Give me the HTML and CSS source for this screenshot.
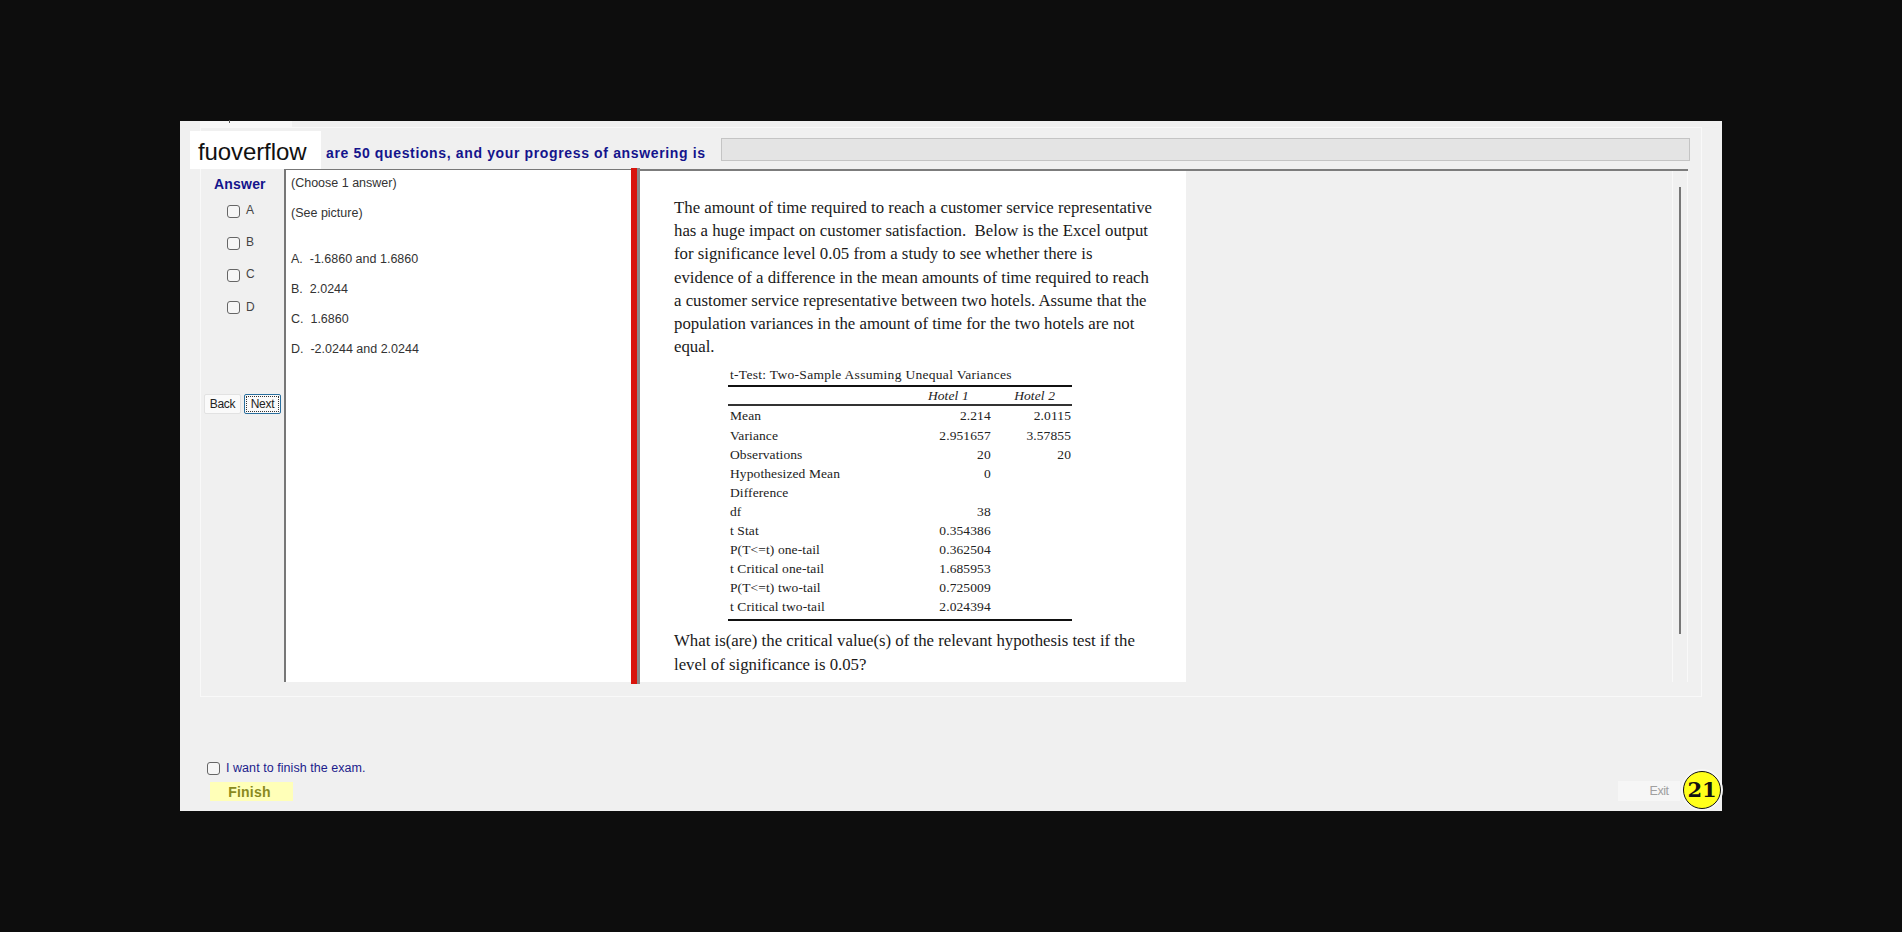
FILE: index.html
```html
<!DOCTYPE html>
<html lang="en">
<head>
    <meta charset="UTF-8">
    <meta name="viewport" content="width=device-width, initial-scale=1.0">
    <title>Exam</title>
    <link rel="stylesheet" href="styles.css">
</head>
<body>
    <div class="exam-window">
        <div class="logo">fuoverflow</div>
        <div class="tab"></div>

        <div class="frame">
            <!-- Progress line -->
            <div class="progress-row">
                <span class="progress-text">are 50 questions, and your progress of answering is</span>
                <div class="progress-bar"></div>
            </div>

            <div class="main-row">
                <!-- Answer checkboxes -->
                <div class="answer-col">
                    <div class="answer-title">Answer</div>
                    <label class="answer-opt"><input type="checkbox"> A</label>
                    <label class="answer-opt"><input type="checkbox"> B</label>
                    <label class="answer-opt"><input type="checkbox"> C</label>
                    <label class="answer-opt"><input type="checkbox"> D</label>
                    <div class="nav-btns">
                        <button class="btn">Back</button>
                        <button class="btn btn-focus"><span>Next</span></button>
                    </div>
                </div>

                <!-- Choices -->
                <div class="choices">
                    <p class="choose">(Choose 1 answer)</p>
                    <p class="see">(See picture)</p>
                    <p class="choice-a">A.&nbsp; -1.6860 and 1.6860</p>
                    <p>B.&nbsp; 2.0244</p>
                    <p>C.&nbsp; 1.6860</p>
                    <p>D.&nbsp; -2.0244 and 2.0244</p>
                </div>

                <div class="splitter"></div>

                <!-- Question picture -->
                <div class="doc-pane">
                    <div class="doc">
                        <p class="doc-text">The amount of time required to reach a customer service representative has a huge impact on customer satisfaction.&nbsp; Below is the Excel output for significance level 0.05 from a study to see whether there is evidence of a difference in the mean amounts of time required to reach a customer service representative between two hotels. Assume that the population variances in the amount of time for the two hotels are not equal.</p>
                        <table class="ttest">
                            <caption>t-Test: Two-Sample Assuming Unequal Variances</caption>
                            <thead>
                                <tr><th></th><th>Hotel 1</th><th>Hotel 2</th></tr>
                            </thead>
                            <tbody>
                                <tr><td>Mean</td><td>2.214</td><td>2.0115</td></tr>
                                <tr><td>Variance</td><td>2.951657</td><td>3.57855</td></tr>
                                <tr><td>Observations</td><td>20</td><td>20</td></tr>
                                <tr><td>Hypothesized Mean</td><td>0</td><td></td></tr>
                                <tr><td>Difference</td><td></td><td></td></tr>
                                <tr><td>df</td><td>38</td><td></td></tr>
                                <tr><td>t Stat</td><td>0.354386</td><td></td></tr>
                                <tr><td>P(T&lt;=t) one-tail</td><td>0.362504</td><td></td></tr>
                                <tr><td>t Critical one-tail</td><td>1.685953</td><td></td></tr>
                                <tr><td>P(T&lt;=t) two-tail</td><td>0.725009</td><td></td></tr>
                                <tr><td>t Critical two-tail</td><td>2.024394</td><td></td></tr>
                            </tbody>
                        </table>
                        <p class="doc-text doc-ask">What is(are) the critical value(s) of the relevant hypothesis test if the level of significance is 0.05?</p>
                    </div>
                    <div class="doc-rest"></div>
                    <div class="scroll-track"><div class="scroll-thumb"></div></div>
                </div>
            </div>
        </div>

        <!-- Bottom controls -->
        <div class="footer">
            <label class="finish-check"><input type="checkbox"> I want to finish the exam.</label>
            <div class="footer-row">
                <button class="finish-btn">Finish</button>
                <button class="exit-btn">Exit</button>
            </div>
        </div>

        <div class="badge">21</div>
    </div>
</body>
</html>
```

FILE: styles.css
```css
body {
    margin: 0;
    height: 932px;
    padding-top: 121px;
    box-sizing: border-box;
    background-color: #0d0d0d;
    font-family: "Liberation Sans", Arial, sans-serif;
    overflow: hidden;
}
p {
    margin: 0;
}
.exam-window {
    position: relative;
    display: flex;
    flex-direction: column;
    width: 1542px;
    height: 690px;
    margin-left: 180px;
    background-color: #f0f0f0;
}
.logo {
    position: absolute;
    left: 10px;
    top: 10px;
    width: 131px;
    height: 38px;
    padding-left: 8px;
    box-sizing: border-box;
    background-color: #fff;
    color: #111;
    font-size: 24px;
    letter-spacing: -0.1px;
    line-height: 41px;
}
.tab {
    position: relative;
    width: 92px;
    height: 6px;
    margin-left: 20px;
    background-color: #f8f8f8;
    flex-shrink: 0;
}
.tab::before {
    content: "";
    position: absolute;
    left: 29px;
    top: -1px;
    width: 1px;
    height: 3px;
    background-color: #555;
}
.frame {
    width: 1502px;
    height: 570px;
    margin-left: 20px;
    border: 1px solid #f9f9f9;
    box-sizing: border-box;
    display: flex;
    flex-direction: column;
}
.progress-row {
    display: flex;
    align-items: flex-start;
    height: 41px;
    padding-left: 125px;
    flex-shrink: 0;
}
.progress-text {
    color: #14148c;
    font-size: 14px;
    font-weight: bold;
    letter-spacing: 0.64px;
    line-height: 16px;
    white-space: nowrap;
    margin-top: 17px;
}
.progress-bar {
    width: 969px;
    height: 23px;
    margin-left: 15px;
    margin-top: 10px;
    box-sizing: border-box;
    background-color: #e4e4e4;
    border: 1px solid #c4c4c4;
}
.main-row {
    display: flex;
    height: 513px;
}
.answer-col {
    width: 83px;
    flex-shrink: 0;
    position: relative;
}
.answer-title {
    margin: 7px 0 2px 13px;
    color: #14148c;
    font-size: 14px;
    font-weight: bold;
    letter-spacing: 0.2px;
    line-height: 16px;
}
.answer-opt {
    display: flex;
    align-items: center;
    gap: 6px;
    height: 32.2px;
    padding-left: 26px;
    color: #444;
    font-size: 12px;
}
input[type="checkbox"] {
    appearance: none;
    width: 13px;
    height: 13px;
    margin: 0;
    background-color: #f6f6f6;
    border: 1px solid #666;
    border-radius: 3px;
    box-sizing: border-box;
}
.answer-opt input {
    margin-top: 2px;
}
.nav-btns {
    display: flex;
    gap: 3px;
    margin: 71px 0 0 3px;
}
.btn {
    width: 37px;
    height: 20px;
    padding: 0;
    font-family: inherit;
    font-size: 12px;
    letter-spacing: -0.3px;
    color: #222;
    background-color: #fafafa;
    border: 1px solid #e2e2e2;
    border-radius: 2px;
}
.btn-focus {
    border: 1px solid #2a6f9e;
}
.btn-focus span {
    display: block;
    margin: 1px;
    line-height: 14px;
    border: 1px dotted #333;
}
.choices {
    width: 347px;
    flex-shrink: 0;
    padding: 6px 0 0 5px;
    box-sizing: border-box;
    background-color: #fff;
    border-left: 2px solid #777;
    border-top: 1px solid #777;
    color: #333;
    font-size: 12.5px;
    line-height: 15px;
}
.choices p {
    margin-bottom: 15px;
}
.choices .see {
    margin-bottom: 31px;
}
.splitter {
    width: 6px;
    flex-shrink: 0;
    margin-top: -1px;
    margin-bottom: -2px;
    background-color: #d8140c;
    border-right: 3px solid #8a8a8a;
}
.doc-pane {
    flex: none;
    width: 1048px;
    display: flex;
    border-top: 2px solid #7c7c7c;
    height: 511px;
}
.doc {
    width: 546px;
    height: 511px;
    padding: 25px 0 0 34px;
    box-sizing: border-box;
    background-color: #fff;
    flex-shrink: 0;
    overflow: hidden;
}
.doc-text {
    width: 480px;
    color: #1a1a1a;
    font-family: "Liberation Serif", "Times New Roman", serif;
    font-size: 16.8px;
    line-height: 23.2px;
}
.doc-ask {
    margin-top: 8px;
}
.ttest {
    width: 344px;
    margin: 6px 0 0 54px;
    border-collapse: collapse;
    color: #222;
    font-family: "Liberation Serif", "Times New Roman", serif;
    font-size: 13.5px;
    letter-spacing: 0.1px;
    line-height: 19px;
    border-bottom: 2px solid #111;
}
.ttest caption {
    text-align: left;
    padding-left: 2px;
    border-bottom: 2px solid #111;
    letter-spacing: 0.3px;
    line-height: 21px;
}
.ttest th {
    font-weight: normal;
    font-style: italic;
    text-align: right;
    padding: 0 22px 0 0;
    height: 17px;
    line-height: 17px;
    border-bottom: 2px solid #333;
}
.ttest th:last-child {
    padding-right: 17px;
}
.ttest td {
    padding: 0;
    height: 19.1px;
    text-align: right;
    vertical-align: top;
}
.ttest tbody tr:last-child td {
    height: 22px;
}
.ttest td:first-child {
    text-align: left;
    padding-left: 2px;
    width: 190px;
}
.ttest td:nth-child(2) {
    width: 70px;
}
.ttest td:last-child {
    width: 80px;
    padding-right: 1px;
}
.doc-rest {
    width: 486px;
    flex-shrink: 0;
}
.scroll-track {
    flex: 1;
    border-left: 1px solid #f9f9f9;
    border-right: 1px solid #f9f9f9;
    padding: 16px 0 0 6px;
}
.scroll-thumb {
    width: 2px;
    height: 447px;
    background-color: #777;
}
.footer {
    margin-top: auto;
    padding: 0 0 10px 27px;
}
.finish-check {
    display: flex;
    align-items: center;
    gap: 6px;
    color: #1c1c8c;
    font-size: 12.5px;
    letter-spacing: 0.05px;
    line-height: 14px;
    margin-bottom: 6px;
}
.footer-row {
    display: flex;
    justify-content: space-between;
    padding-right: 42px;
}
.finish-btn {
    width: 83px;
    height: 19px;
    margin-top: 1px;
    margin-left: 3px;
    padding: 0 4px 0 0;
    background-color: #ffffb8;
    border: none;
    color: #8a8a1e;
    font-family: inherit;
    font-size: 14px;
    font-weight: bold;
    letter-spacing: 0.2px;
}
.exit-btn {
    width: 62px;
    height: 20px;
    padding: 0 0 0 20px;
    background-color: #f6f6f6;
    border: none;
    color: #a0a0a0;
    font-family: inherit;
    font-size: 12.5px;
    letter-spacing: -0.5px;
}
.badge {
    position: absolute;
    right: 1px;
    bottom: 2px;
    width: 38px;
    height: 38px;
    box-sizing: border-box;
    border: 1px solid #111;
    border-radius: 50%;
    background-color: #ffff1a;
    color: #111;
    font-family: "DejaVu Serif", serif;
    font-size: 21px;
    font-weight: bold;
    line-height: 36px;
    text-align: center;
    box-shadow: 0 0 0 2px #f6f6f6;
}
```
